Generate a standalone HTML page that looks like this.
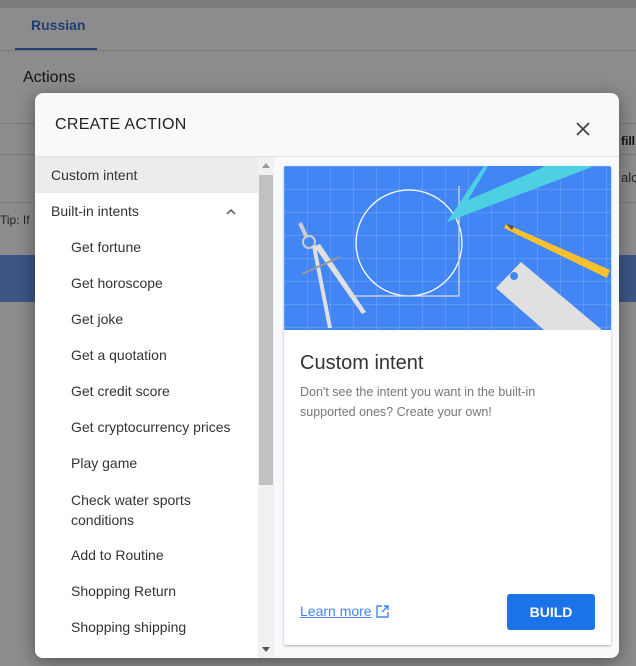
<!DOCTYPE html>
<html><head><style>
*{margin:0;padding:0;box-sizing:border-box}
body{width:636px;height:666px;overflow:hidden;font-family:"Liberation Sans",sans-serif;position:relative;background:#fff}
.bg{position:absolute;color:#333}
.ov{position:absolute;left:0;top:0;width:636px;height:666px;background:rgba(0,0,0,.45)}
.dlg{position:absolute;left:35px;top:93px;width:584px;height:565px;background:#f8f9fa;border-radius:8px;overflow:hidden;box-shadow:0 4px 18px rgba(0,0,0,.4)}
.hdr{height:64px;border-bottom:1px solid #e2e2e2;position:relative}
.hdr h1{position:absolute;left:20px;top:23px;font-size:16px;font-weight:normal;color:#222;letter-spacing:.3px}
.list{position:absolute;left:0;top:64px;width:223px;bottom:0;background:#fff}
.it{height:36px;line-height:37px;font-size:14px;color:#333;padding-left:16px}
.sub{padding-left:36px}
.sb{position:absolute;left:223px;top:64px;width:16px;bottom:0;background:#f1f1f1}
.card{position:absolute;left:249px;top:73px;width:327px;height:479px;background:#fff;box-shadow:0 1px 2px rgba(0,0,0,.3);border-radius:2px;overflow:hidden}
</style></head><body>
<div class="bg" style="left:0;top:0;width:636px;height:8px;background:#e0e0e0"></div>
<div class="bg" style="left:31px;top:17px;font-size:14px;color:#3f6fd8;font-weight:bold">Russian</div>
<div class="bg" style="left:15px;top:48px;width:82px;height:3px;background:#3f6fd8"></div>
<div class="bg" style="left:0;top:50px;width:636px;height:1px;background:#ddd"></div>
<div class="bg" style="left:23px;top:69px;font-size:16px;color:#222">Actions</div>
<div class="bg" style="left:0;top:123px;width:636px;height:1px;background:#ddd"></div>
<div class="bg" style="left:0;top:154px;width:636px;height:1px;background:#ddd"></div>
<div class="bg" style="left:0;top:202px;width:636px;height:1px;background:#ddd"></div>
<div class="bg" style="left:0;top:213px;font-size:12px;color:#444">Tip: If</div>
<div class="bg" style="left:0;top:255px;width:636px;height:47px;background:#6f9df0"></div>
<div class="bg" style="left:621px;top:134px;font-size:12px;font-weight:bold;color:#222">fill</div>
<div class="bg" style="left:621px;top:170px;font-size:13px;color:#444">alog</div>
<div class="ov"></div>

<div class="dlg">
 <div class="hdr"><h1>CREATE ACTION</h1>
  <svg style="position:absolute;left:540px;top:28px" width="16" height="16" viewBox="0 0 16 16"><path d="M2 2L14 14M14 2L2 14" stroke="#444" stroke-width="1.8"/></svg>
 </div>
 <div class="list">
  <div class="it" style="background:#ececec">Custom intent</div>
  <div class="it" style="position:relative">Built-in intents<svg style="position:absolute;left:191px;top:15px" width="10" height="7" viewBox="0 0 10 7"><path d="M1 6L5 2L9 6" stroke="#555" stroke-width="1.5" fill="none"/></svg></div>
  <div class="it sub">Get fortune</div>
  <div class="it sub">Get horoscope</div>
  <div class="it sub">Get joke</div>
  <div class="it sub">Get a quotation</div>
  <div class="it sub">Get credit score</div>
  <div class="it sub">Get cryptocurrency prices</div>
  <div class="it sub">Play game</div>
  <div class="it sub" style="line-height:20px;height:56px;padding-top:9px">Check water sports<br>conditions</div>
  <div class="it sub">Add to Routine</div>
  <div class="it sub">Shopping Return</div>
  <div class="it sub">Shopping shipping</div>
 </div>
 <div class="sb">
  <svg style="position:absolute;left:4px;top:6px" width="8" height="5"><path d="M0 5L4 0L8 5Z" fill="#999"/></svg>
  <div style="position:absolute;left:1px;top:18px;width:14px;height:310px;background:#c1c1c1"></div>
  <svg style="position:absolute;left:4px;bottom:6px" width="8" height="5"><path d="M0 0L4 5L8 0Z" fill="#555"/></svg>
 </div>
 <div class="card">
  <svg width="327" height="164" viewBox="0 0 327 164" style="display:block">
   <defs><pattern id="g" width="23" height="23" patternUnits="userSpaceOnUse"><path d="M0 0H23M0 0V23" stroke="#7aa7f8" stroke-width="1"/></pattern></defs>
   <rect width="327" height="164" fill="#4285f4"/><rect width="327" height="164" fill="url(#g)"/>
   <circle cx="125" cy="77" r="53" fill="none" stroke="#fff" stroke-width="1.3"/>
   <path d="M65 130H175V20" fill="none" stroke="#ddd" stroke-width="1.2"/>
   <path d="M163 56L200 0H310L295 6Z" fill="#4dd0e1"/>
   <path d="M204 0L184 34L258 2L260 0Z" fill="#4285f4"/>
   <path d="M222 58L326 104L323 112L220 62Z" fill="#fbc02d"/>
   <path d="M222 58L230 60L228 64Z" fill="#555"/>
   <path d="M212 122L237 96L318 164H260Z" fill="#e0e0e0"/>
   <circle cx="230" cy="110" r="4" fill="#4285f4"/>
   <path d="M16 57L22 70" stroke="#ccc" stroke-width="4"/>
   <circle cx="25" cy="76" r="6" fill="none" stroke="#ccc" stroke-width="2"/>
   <path d="M28 80L44 162L48 162L32 80Z" fill="#e0e0e0"/>
   <path d="M30 80L78 148L82 146L36 78Z" fill="#e0e0e0"/>
   <path d="M18 108L56 91" stroke="#999" stroke-width="2"/>
  </svg>
  <div style="position:absolute;left:16px;top:186px;font-size:20px;color:#333">Custom intent</div>
  <div style="position:absolute;left:16px;top:216px;font-size:12.5px;line-height:20px;color:#777;width:272px">Don't see the intent you want in the built-in supported ones? Create your own!</div>
  <div style="position:absolute;left:16px;top:437px;font-size:14px;color:#4285f4;text-decoration:underline">Learn more</div>
  <svg style="position:absolute;left:92px;top:439px" width="13" height="13" viewBox="0 0 13 13"><path d="M6 1H1V12H12V7M8 1H12V5M12 1L6 7" stroke="#4285f4" stroke-width="1.4" fill="none"/></svg>
  <div style="position:absolute;left:223px;top:428px;width:88px;height:36px;background:#1a73e8;border-radius:3px;color:#fff;font-size:14px;font-weight:bold;text-align:center;line-height:36px">BUILD</div>
 </div>
</div>
</body></html>
